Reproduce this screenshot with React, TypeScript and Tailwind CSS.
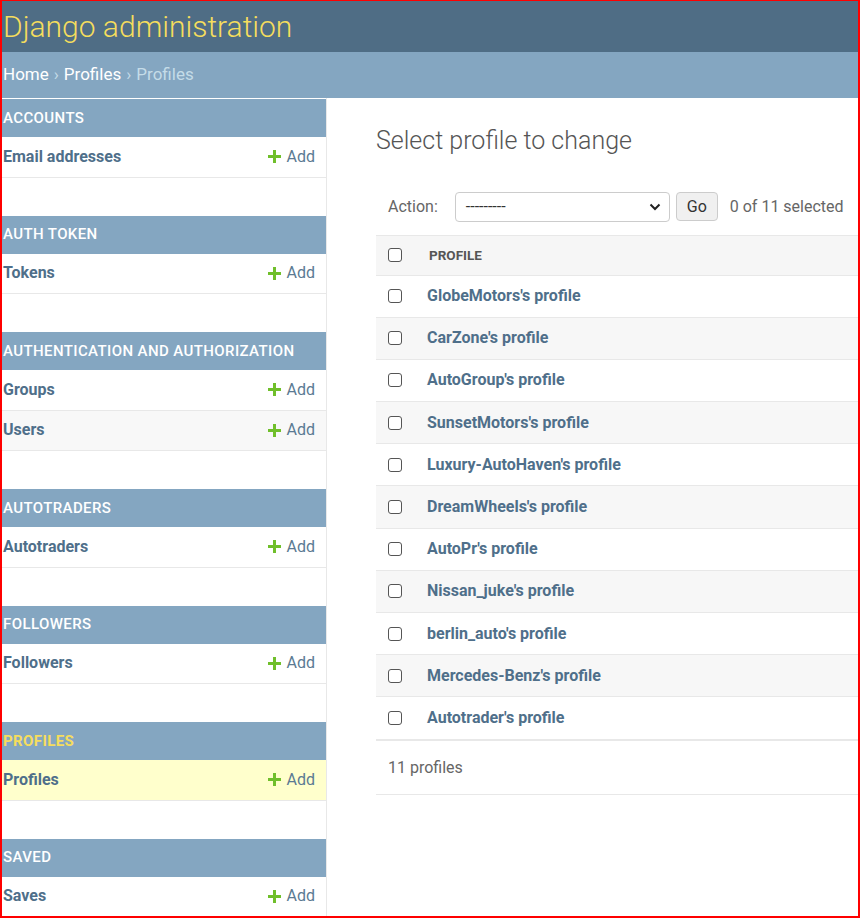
import React from "react";

type Model = { name: string; current?: boolean };
type AppModule = { label: string; current?: boolean; models: Model[] };

const modules: AppModule[] = [
  { label: "Accounts", models: [{ name: "Email addresses" }] },
  { label: "Auth Token", models: [{ name: "Tokens" }] },
  { label: "Authentication and Authorization", models: [{ name: "Groups" }, { name: "Users" }] },
  { label: "Autotraders", models: [{ name: "Autotraders" }] },
  { label: "Followers", models: [{ name: "Followers" }] },
  { label: "Profiles", current: true, models: [{ name: "Profiles", current: true }] },
  { label: "Saved", models: [{ name: "Saves" }] },
];

const profiles = [
  "GlobeMotors's profile",
  "CarZone's profile",
  "AutoGroup's profile",
  "SunsetMotors's profile",
  "Luxury-AutoHaven's profile",
  "DreamWheels's profile",
  "AutoPr's profile",
  "Nissan_juke's profile",
  "berlin_auto's profile",
  "Mercedes-Benz's profile",
  "Autotrader's profile",
];

function PlusIcon() {
  return (
    <svg width="13" height="13" viewBox="0 0 13 13" className="shrink-0">
      <path d="M5 0h3v5h5v3H8v5H5V8H0V5h5z" fill="#70bf2b" />
    </svg>
  );
}

function Checkbox() {
  return <span className="block w-[14px] h-[14px] rounded-[3px] border border-[#555] bg-white" />;
}

function Sidebar() {
  return (
    <nav className="w-[325px] shrink-0 border-r border-[#e8e8e8] pt-px">
      {modules.map((m) => (
        <div key={m.label} className="mb-[38px]">
          <div
            className={`h-[38px] flex items-center bg-[#84a6c1] px-px text-[15px] uppercase tracking-[0.4px] ${
              m.current ? "text-[#f5dd5d] font-bold" : "text-white font-medium"
            }`}
          >
            {m.label}
          </div>
          {m.models.map((md, i) => (
            <div
              key={md.name}
              className={`h-[40.5px] flex items-center justify-between border-b border-[#e8e8e8] pl-px pr-[11px] ${
                md.current ? "bg-[#ffffcc]" : i % 2 === 1 ? "bg-[#f8f8f8]" : "bg-white"
              }`}
            >
              <span className="text-[16px] font-bold text-[#4f6f8a]">{md.name}</span>
              <span className="flex items-center gap-[6px] text-[16px] text-[#5b7a93]">
                <PlusIcon />
                Add
              </span>
            </div>
          ))}
        </div>
      ))}
    </nav>
  );
}

function Content() {
  return (
    <main className="flex-1 min-w-0 pl-[49px] pt-[24px]">
      <h1 className="text-[25px] font-light text-[#555]">Select profile to change</h1>
      <div className="mt-[32px] flex items-center h-[30px] pl-[12px] text-[16px] text-[#666]">
        <span>Action:</span>
        <div className="ml-[17px] w-[215px] h-[30px] rounded-[4px] border border-[#cccccc] bg-white flex items-center justify-between pl-[10px] pr-[8px] text-[#333]">
          <span className="text-[16px]">---------</span>
          <svg width="12" height="8" viewBox="0 0 12 8">
            <path d="M1.5 1.5 6 6l4.5-4.5" fill="none" stroke="#222" strokeWidth="2" />
          </svg>
        </div>
        <button className="ml-[6px] h-[29px] w-[42px] rounded-[4px] border border-[#cccccc] bg-[#f0f0f0] text-[16px] text-[#333]">
          Go
        </button>
        <span className="ml-[12px] whitespace-nowrap">0 of 11 selected</span>
      </div>
      <div className="mt-[13px] w-[520px]">
        <div className="h-[41px] flex items-center bg-[#f6f6f6] border-y border-[#e8e8e8] pl-[12px]">
          <Checkbox />
          <span className="ml-[27px] text-[13.5px] font-bold uppercase text-[#555]">Profile</span>
        </div>
        {profiles.map((p, i) => (
          <div
            key={p}
            className={`h-[42.2px] flex items-center border-b border-[#e8e8e8] pl-[12px] ${
              i % 2 === 1 ? "bg-[#f7f7f7]" : "bg-white"
            }`}
          >
            <Checkbox />
            <span className="ml-[25px] text-[16px] font-bold text-[#4f6f8a]">{p}</span>
          </div>
        ))}
        <div className="h-[55px] flex items-center border-t border-b border-[#e8e8e8] pl-[12px] pt-[2px] text-[16px] text-[#666]">
          11 profiles
        </div>
      </div>
    </main>
  );
}

export default function App() {
  return (
    <div
      className="w-[860px] h-[918px] overflow-hidden bg-white border-t border-l-2 border-r-2 border-b-2 border-[#ff0000]"
      style={{ fontFamily: "Roboto, 'Liberation Sans', sans-serif" }}
    >
      <header className="h-[51px] bg-[#4f6d85] flex items-center px-px">
        <span className="text-[30px] font-light text-[#f5dd5d] leading-none">Django administration</span>
      </header>
      <div className="h-[46px] bg-[#84a6c1] flex items-center px-px text-[17px] text-white">
        <span>Home</span>
        <span className="mx-[5px] text-[#c4dce8]">›</span>
        <span>Profiles</span>
        <span className="mx-[5px] text-[#c4dce8]">›</span>
        <span className="text-[#c4dce8]">Profiles</span>
      </div>
      <div className="flex">
        <Sidebar />
        <Content />
      </div>
    </div>
  );
}
